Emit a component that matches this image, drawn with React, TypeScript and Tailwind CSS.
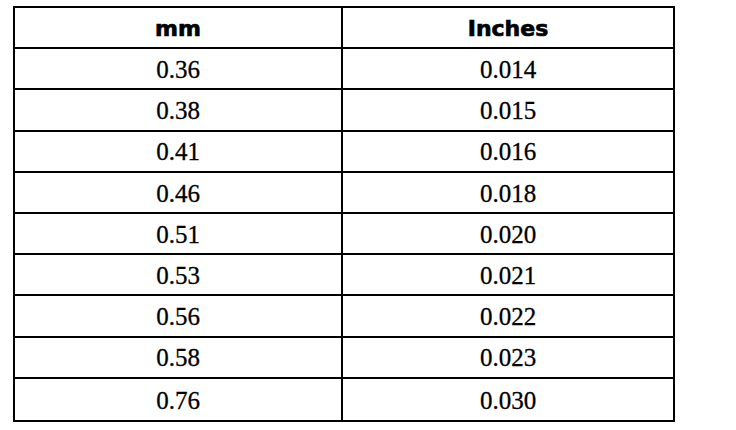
const rows: [string, string][] = [
  ["0.36", "0.014"],
  ["0.38", "0.015"],
  ["0.41", "0.016"],
  ["0.46", "0.018"],
  ["0.51", "0.020"],
  ["0.53", "0.021"],
  ["0.56", "0.022"],
  ["0.58", "0.023"],
  ["0.76", "0.030"],
];

export default function App() {
  return (
    <div className="w-[736px] h-[430px] bg-white pl-[13px] pt-[6px]">
      <div className="w-[662px] h-[416px] border-2 border-black grid grid-cols-[328px_1fr] grid-rows-10 text-black">
        <div className="border-r-2 border-b-2 border-black flex items-center justify-center font-bold text-[22px] font-['DejaVu_Sans',sans-serif] pt-[1px] [-webkit-text-stroke:0.7px_black]">
          mm
        </div>
        <div className="border-b-2 border-black flex items-center justify-center font-bold text-[22px] font-['DejaVu_Sans',sans-serif] pt-[1px] [-webkit-text-stroke:0.7px_black]">
          Inches
        </div>
        {rows.map(([mm, inch], i) => {
          const last = i === rows.length - 1;
          return [
            <div
              key={`a${i}`}
              className={
                last
                  ? "border-r-2 border-black flex items-center justify-center text-[25px] font-['Liberation_Serif',serif] pt-[2px] [-webkit-text-stroke:0.3px_black]"
                  : "border-r-2 border-b-2 border-black flex items-center justify-center text-[25px] font-['Liberation_Serif',serif] pt-[2px] [-webkit-text-stroke:0.3px_black]"
              }
            >
              {mm}
            </div>,
            <div
              key={`b${i}`}
              className={
                last
                  ? "flex items-center justify-center text-[25px] font-['Liberation_Serif',serif] pt-[2px] [-webkit-text-stroke:0.3px_black]"
                  : "border-b-2 border-black flex items-center justify-center text-[25px] font-['Liberation_Serif',serif] pt-[2px] [-webkit-text-stroke:0.3px_black]"
              }
            >
              {inch}
            </div>,
          ];
        })}
      </div>
    </div>
  );
}
